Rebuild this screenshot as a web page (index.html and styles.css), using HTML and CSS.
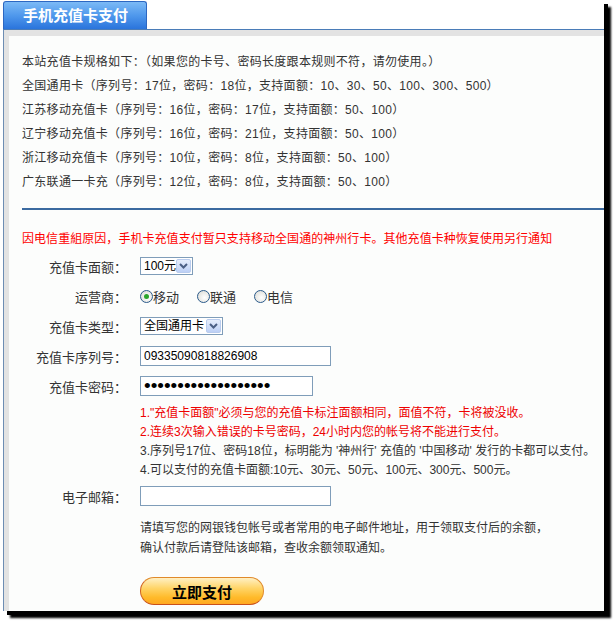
FILE: index.html
```html
<!DOCTYPE html>
<html lang="zh-CN">
<head>
    <meta charset="UTF-8">
    <title>手机充值卡支付</title>
    <link rel="stylesheet" href="styles.css">
</head>
<body>

<div class="win">
    <div class="tabs">
        <div class="tab">手机充值卡支付</div>
    </div>
    <div class="panel">
        <div class="inner">
            <div class="spec">
                <p>本站充值卡规格如下：（如果您的卡号、密码长度跟本规则不符，请勿使用。）</p>
                <p>全国通用卡（序列号：17位，密码：18位，支持面额：10、30、50、100、300、500）</p>
                <p>江苏移动充值卡（序列号：16位，密码：17位，支持面额：50、100）</p>
                <p>辽宁移动充值卡（序列号：16位，密码：21位，支持面额：50、100）</p>
                <p>浙江移动充值卡（序列号：10位，密码：8位，支持面额：50、100）</p>
                <p>广东联通一卡充（序列号：12位，密码：8位，支持面额：50、100）</p>
            </div>

            <div class="rule"></div>

            <p class="notice">因电信重組原因，手机卡充值支付暂只支持移动全国通的神州行卡。其他充值卡种恢复使用另行通知</p>

            <div class="row">
                <span class="lbl">充值卡面额：</span>
                <div class="sel sel-amount">
                    <span>100元</span>
                    <span class="arrow"><svg width="9" height="6" viewBox="0 0 9 6"><path d="M1 1 L4.5 4.5 L8 1" fill="none" stroke="#4b5f84" stroke-width="2"/></svg></span>
                </div>
            </div>
            <div class="row">
                <span class="lbl">运营商：</span>
                <div class="radios">
                    <span class="opt"><span class="radio on"></span>移动</span>
                    <span class="opt"><span class="radio"></span>联通</span>
                    <span class="opt"><span class="radio"></span>电信</span>
                </div>
            </div>
            <div class="row">
                <span class="lbl">充值卡类型：</span>
                <div class="sel sel-type">
                    <span>全国通用卡</span>
                    <span class="arrow"><svg width="9" height="6" viewBox="0 0 9 6"><path d="M1 1 L4.5 4.5 L8 1" fill="none" stroke="#4b5f84" stroke-width="2"/></svg></span>
                </div>
            </div>
            <div class="row">
                <span class="lbl">充值卡序列号：</span>
                <input class="txt" type="text" value="09335090818826908">
            </div>
            <div class="row">
                <span class="lbl">充值卡密码：</span>
                <input class="txt pwd" type="password" value="1234567890123456789">
            </div>

            <div class="notes">
                <p class="red">1."充值卡面额"必须与您的充值卡标注面额相同，面值不符，卡将被没收。</p>
                <p class="red">2.连续3次输入错误的卡号密码，24小时内您的帐号将不能进行支付。</p>
                <p>3.序列号17位、密码18位，标明能为 '神州行' 充值的 '中国移动' 发行的卡都可以支付。</p>
                <p>4.可以支付的充值卡面额:10元、30元、50元、100元、300元、500元。</p>
            </div>

            <div class="row row-mail">
                <span class="lbl">电子邮箱：</span>
                <input class="txt" type="text" value="">
            </div>

            <div class="help">
                <p>请填写您的网银钱包帐号或者常用的电子邮件地址，用于领取支付后的余额，</p>
                <p>确认付款后请登陆该邮箱，查收余额领取通知。</p>
            </div>

            <button class="pay">立即支付</button>
        </div>
    </div>
</div>

</body>
</html>
```

FILE: styles.css
```css
body {
    margin: 0;
    min-height: 623px;
    background-color: #ffffff;
    font-family: "Liberation Sans", "Noto Sans CJK SC", sans-serif;
    font-size: 12px;
    color: #333333;
}
p {
    margin: 0;
}
.win {
    margin-left: 3px;
    width: 601px;
    height: 611px;
    display: flex;
    flex-direction: column;
    background-color: #ffffff;
    box-shadow: 4px 4px 0 #000000, 7px 7px 2px #000000;
}
.tabs {
    height: 29px;
    display: flex;
    align-items: flex-end;
    border-bottom: 1px solid #4a7cb8;
    background-color: #ffffff;
}
.tab {
    width: 123px;
    height: 27px;
    padding-left: 19px;
    border: 1px solid #2c67c2;
    border-bottom: none;
    border-radius: 3px 3px 0 0;
    background: linear-gradient(#7cbaf6, #4f98ec 50%, #2a74dc);
    color: #ffffff;
    font-weight: bold;
    font-size: 15px;
    line-height: 27px;
}
.panel {
    flex: 1;
    display: flex;
    border-left: 1px solid #6d8db3;
    background-color: #e3e3e3;
    padding: 6px 0 0 5px;
}
.inner {
    flex: 1;
    background-color: #fcfdfc;
    padding: 14px 0 0 13px;
}
.spec p {
    line-height: 24px;
    letter-spacing: 0.3px;
}
.rule {
    height: 2px;
    margin-top: 14px;
    background-color: #3b6aa0;
}
.notice {
    margin-top: 17px;
    line-height: 24px;
    color: #ff0000;
    letter-spacing: 0.05px;
}
.row {
    display: flex;
    align-items: center;
    height: 30px;
}
.lbl {
    width: 105px;
    margin-right: 13px;
    text-align: right;
    font-size: 13px;
}
.sel {
    box-sizing: border-box;
    height: 18px;
    display: flex;
    align-items: center;
    justify-content: space-between;
    padding-left: 3px;
    border: 1px solid #7f9db9;
    background-color: #ffffff;
    color: #000000;
    font-size: 12px;
    line-height: 16px;
    white-space: nowrap;
}
.sel-amount {
    width: 53px;
}
.sel-type {
    width: 83px;
}
.arrow {
    flex-shrink: 0;
    width: 15px;
    height: 14px;
    margin-right: 1px;
    display: flex;
    align-items: center;
    justify-content: center;
    box-sizing: border-box;
    border: 1px solid #b9ccee;
    border-radius: 2px;
    background: linear-gradient(#e6eefc, #bcd0f6);
}
.radios {
    display: flex;
    font-size: 13px;
    color: #333333;
}
.opt {
    width: 57px;
    display: flex;
    align-items: center;
}
.radio {
    box-sizing: border-box;
    width: 13px;
    height: 13px;
    border: 1px solid #2a5a8a;
    border-radius: 50%;
    background: radial-gradient(circle at 60% 60%, #ffffff, #d8d8d2);
    display: flex;
    align-items: center;
    justify-content: center;
}
.radio.on::after {
    content: "";
    width: 5px;
    height: 5px;
    border-radius: 50%;
    background-color: #2aa52a;
}
.txt {
    box-sizing: border-box;
    width: 191px;
    height: 20px;
    padding: 0 3px;
    border: 1px solid #7f9db9;
    background-color: #ffffff;
    font-family: "Liberation Sans", sans-serif;
    font-size: 12px;
    color: #000000;
    outline: none;
}
.pwd {
    width: 173px;
    font-size: 19px;
}
.notes {
    margin: 3px 0 0 118px;
}
.notes p {
    line-height: 19px;
}
.notes .red {
    color: #ee0000;
}
.row-mail {
    margin-top: 1px;
}
.help {
    margin: 7px 0 0 118px;
}
.help p {
    line-height: 20px;
}
.pay {
    display: block;
    margin: 19px 0 0 118px;
    width: 124px;
    height: 28px;
    border: 1px solid #e08a2a;
    border-bottom-color: #c8501a;
    border-left-color: #d0601e;
    border-radius: 14px;
    background: linear-gradient(#fff0c4, #ffd466 40%, #ffba2a 75%, #ffa820);
    font-family: "Noto Sans CJK SC", sans-serif;
    font-weight: bold;
    font-size: 15px;
    color: #000000;
    padding: 0;
}
```
